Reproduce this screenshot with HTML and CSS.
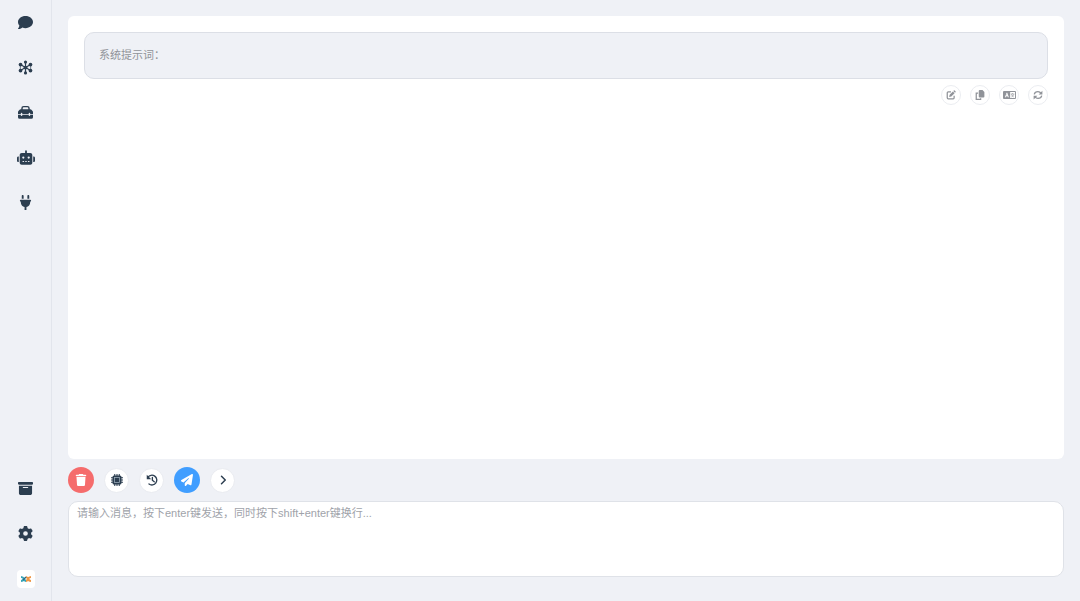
FILE: index.html
```html
<!DOCTYPE html>
<html lang="zh-CN">
<head>
    <meta charset="UTF-8">
    <meta name="viewport" content="width=device-width, initial-scale=1.0">
    <title>Chat</title>
    <link rel="stylesheet" href="styles.css">
</head>
<body>
    <!-- Sidebar -->
    <nav class="sidebar">
        <a class="nav-item" href="#chat" aria-label="聊天">
            <svg viewBox="0 0 512 512"><path d="M512 240c0 114.9-114.6 208-256 208c-37.1 0-72.3-6.4-104.1-17.9c-11.9 8.7-31.3 20.6-54.3 30.6C73.6 471.1 44.7 480 16 480c-6.5 0-12.3-3.9-14.8-9.9c-2.5-6-1.1-12.8 3.4-17.4c8-8 15-17 21.4-28.7c10-16.6 19.5-38.4 21.4-62.9C17.7 326.8 0 285.1 0 240C0 125.1 114.6 32 256 32s256 93.1 256 208z"/></svg>
        </a>
        <a class="nav-item" href="#nodes" aria-label="节点">
            <svg viewBox="0 0 16 16">
                <path d="M8 2v12M3 5l10 6M13 5L3 11" fill="none" stroke="currentColor" stroke-width="1.300"/>
                <path d="M2.500 5v6M13.500 5v6" fill="none" stroke="currentColor" stroke-width=".7"/>
                <circle cx="8" cy="8" r="2"/><circle cx="8" cy="2.200" r="1.700"/><circle cx="8" cy="13.800" r="1.700"/>
                <circle cx="2.700" cy="4.800" r="2"/><circle cx="13.300" cy="4.800" r="2"/><circle cx="2.700" cy="11.200" r="2"/><circle cx="13.300" cy="11.200" r="2"/>
            </svg>
        </a>
        <a class="nav-item" href="#tools" aria-label="工具">
            <svg viewBox="0 0 16 16"><path fill-rule="evenodd" d="M3.500 4.500V3.500Q3.500 1 6 1h4q2.500 0 2.500 2.500v1h.8q.6 0 1 .5l1.200 1.500q.5.6.5 1.300V9.500h-3V9q0-.7-.8-.7t-.8.7v.5H4.600V9q0-.7-.8-.7T3 9v.5H0V7.800q0-.7.5-1.300L1.700 5q.4-.5 1-.5zM5 4.500h6V3.500q0-1-1-1H6q-1 0-1 1zM0 10.500h3v.5q0 .7.8.7t.8-.7v-.5h6.800v.5q0 .7.8.7T13 11v-.5h3V13q0 1.700-1.700 1.700H1.700Q0 14.700 0 13z"/></svg>
        </a>
        <a class="nav-item" href="#agents" aria-label="智能体">
            <svg class="wide" viewBox="0 0 640 512"><path fill-rule="evenodd" d="M320 0c18 0 32 14 32 32v64h120c40 0 72 32 72 72v272c0 40-32 72-72 72H168c-40 0-72-32-72-72V168c0-40 32-72 72-72h120V32c0-18 14-32 32-32zM208 384a16 16 0 0 0 0 32h32a16 16 0 0 0 0-32zm96 0a16 16 0 0 0 0 32h32a16 16 0 0 0 0-32zm96 0a16 16 0 0 0 0 32h32a16 16 0 0 0 0-32zM264 256a40 40 0 1 0-80 0 40 40 0 1 0 80 0zm152 40a40 40 0 1 0 0-80 40 40 0 1 0 0 80zM48 224h16v192H48c-27 0-48-21-48-48v-96c0-27 21-48 48-48zm544 0c27 0 48 21 48 48v96c0 27-21 48-48 48h-16V224z"/></svg>
        </a>
        <a class="nav-item" href="#plugins" aria-label="插件">
            <svg viewBox="0 0 512 512"><path d="M160 0c18 0 32 14 32 32v96h-64V32c0-18 14-32 32-32zm192 0c18 0 32 14 32 32v96h-64V32c0-18 14-32 32-32zM96 160h320a32 32 0 0 1 0 64v32c0 77-55 142-128 157v99h-64v-99C151 398 96 333 96 256v-32a32 32 0 0 1 0-64z"/></svg>
        </a>
        <a class="nav-item nav-bottom" href="#archive" aria-label="归档">
            <svg viewBox="0 0 512 512"><path fill-rule="evenodd" d="M32 32h448c18 0 32 14 32 32v32c0 18-14 32-32 32H32C14 128 0 114 0 96V64c0-18 14-32 32-32zm0 128h448v256c0 35-29 64-64 64H96c-35 0-64-29-64-64zm144 48a16 16 0 0 0 0 32h160a16 16 0 0 0 0-32z"/></svg>
        </a>
        <a class="nav-item" href="#settings" aria-label="设置">
            <svg viewBox="0 0 512 512"><path d="M495.9 166.6c3.2 8.7 .5 18.4-6.4 24.6l-43.3 39.4c1.1 8.3 1.7 16.8 1.7 25.4s-.6 17.1-1.7 25.4l43.3 39.4c6.9 6.2 9.6 15.9 6.4 24.6c-4.4 11.9-9.7 23.3-15.8 34.3l-4.7 8.1c-6.6 11-14 21.4-22.1 31.2c-5.9 7.2-15.7 9.6-24.5 6.8l-55.7-17.7c-13.4 10.3-28.2 18.9-44 25.4l-12.5 57.1c-2 9.1-9 16.3-18.2 17.8c-13.8 2.3-28 3.5-42.5 3.5s-28.7-1.2-42.5-3.5c-9.2-1.5-16.2-8.7-18.2-17.8l-12.5-57.1c-15.8-6.5-30.6-15.1-44-25.4L83.1 425.9c-8.8 2.8-18.6 .3-24.5-6.8c-8.1-9.8-15.5-20.2-22.1-31.2l-4.7-8.1c-6.1-11-11.4-22.4-15.8-34.3c-3.2-8.7-.5-18.4 6.4-24.6l43.3-39.4C64.6 273.1 64 264.6 64 256s.6-17.1 1.7-25.4L22.4 191.2c-6.9-6.2-9.6-15.9-6.4-24.6c4.4-11.9 9.7-23.3 15.8-34.3l4.7-8.1c6.6-11 14-21.4 22.1-31.2c5.9-7.2 15.7-9.6 24.5-6.8l55.7 17.7c13.4-10.3 28.2-18.9 44-25.4l12.5-57.1c2-9.1 9-16.3 18.2-17.8C227.3 1.2 241.5 0 256 0s28.7 1.2 42.5 3.5c9.2 1.5 16.2 8.7 18.2 17.8l12.5 57.1c15.8 6.5 30.6 15.1 44 25.4l55.7-17.7c8.8-2.8 18.6-.3 24.5 6.8c8.1 9.8 15.5 20.2 22.1 31.2l4.7 8.1c6.1 11 11.4 22.4 15.8 34.3zM256 336a80 80 0 1 0 0-160 80 80 0 1 0 0 160z"/></svg>
        </a>
        <a class="nav-item" href="#about" aria-label="关于">
            <span class="logo">
                <svg viewBox="0 0 12 8" fill="none" stroke-width="2">
                    <path stroke="#38a5b8" d="M1 2q2 0 3 2T6 6M1 6q2 0 3-2"/>
                    <path stroke="#ef9645" d="M6 2q1 0 2 2t3 2M6 6q1 0 2-2t3-2"/>
                    <path stroke="#2d6b83" d="M3 5l3-3" stroke-width="1.500"/>
                </svg>
            </span>
        </a>
    </nav>

    <main class="main">
        <!-- Messages -->
        <section class="chat-box">
            <div class="system-prompt">系统提示词：</div>
            <div class="message-actions">
                <button class="small-button" aria-label="编辑">
                    <svg viewBox="0 0 16 16"><path d="M8 3H3.500Q2 3 2 4.500v8Q2 14 3.500 14h8q1.500 0 1.500-1.500V9" fill="none" stroke="currentColor" stroke-width="2"/><path d="M5 11l.8-3.500L11 2.300l2.700 2.700-5.200 5.200zM11.700 1.600l.8-.8q.7-.6 1.400 0l1.300 1.300q.6.7 0 1.400l-.8.8z"/></svg>
                </button>
                <button class="small-button" aria-label="复制">
                    <svg viewBox="0 0 16 16"><path d="M7.500 0H12l3 3v7.500q0 1.500-1.500 1.500h-6Q6 12 6 10.500v-9Q6 0 7.500 0z"/><path d="M5 5H2v10h7v-2" fill="none" stroke="currentColor" stroke-width="2"/></svg>
                </button>
                <button class="small-button" aria-label="翻译">
                    <svg class="wide" viewBox="0 0 20 14"><path fill-rule="evenodd" d="M1.500 1h17Q20 1 20 2.500v9q0 1.500-1.500 1.500h-17Q0 13 0 11.500v-9Q0 1 1.500 1zM11 2.500v9h7.500v-9zM5.500 3.500L3 10.500h1.500l.5-1.500h2l.5 1.500H9L6.500 3.500zM6 5.500l.6 2H5.400z"/><path d="M12 5.500h5.500M14.700 4v1.500M16.500 6q-.7 3-3.500 4M13 6q.8 3 3.500 4" fill="none" stroke="currentColor"/></svg>
                </button>
                <button class="small-button" aria-label="刷新">
                    <svg viewBox="0 0 16 16"><path d="M2 7Q3 2.500 8 2.500q3 0 5 3M14 9q-1 4.500-6 4.500-3 0-5-3" fill="none" stroke="currentColor" stroke-width="2"/><path d="M15 1v6H9zM1 15V9h6z"/></svg>
                </button>
            </div>
        </section>

        <!-- Toolbar -->
        <div class="toolbar">
            <button class="round-button danger" aria-label="清空">
                <svg viewBox="0 0 14 16"><path d="M4.500 0h5l.7 1H13q1 0 1 1t-1 1H1Q0 3 0 2t1-1h2.800zM1 4h12l-.7 10.600Q12.200 16 10.900 16H3.100Q1.800 16 1.700 14.600z"/></svg>
            </button>
            <button class="round-button" aria-label="模型">
                <svg viewBox="0 0 16 16"><path d="M5 0v16M8 0v16M11 0v16M0 5h16M0 8h16M0 11h16" stroke="currentColor" stroke-width="1.400"/><rect x="2" y="2" width="12" height="12" rx="2"/><rect x="4.700" y="4.700" width="6.600" height="6.600" fill="none" stroke="#9fb0bd"/></svg>
            </button>
            <button class="round-button" aria-label="历史">
                <svg viewBox="0 0 16 16"><path d="M2.500 4.500A6.500 6.500 0 1 1 4 13.300M8.500 4.500V8.300l2.500 2" fill="none" stroke="currentColor" stroke-width="1.800" stroke-linecap="round"/><path d="M1 1v6h6z"/></svg>
            </button>
            <button class="round-button primary" aria-label="发送">
                <svg viewBox="0 0 512 512"><path d="M498.1 5.6c10.1 7 15.4 19.1 13.5 31.2l-64 416c-1.5 9.7-7.4 18.2-16 23s-18.9 5.4-28 1.6L284 427.7l-68.5 74.1c-8.9 9.7-22.9 12.9-35.2 8.1S160 493.2 160 480V396.4c0-4 1.5-7.8 4.2-10.7L331.8 202.8c5.8-6.3 5.6-16-.4-22s-15.7-6.4-22-.7L106 360.8 17.7 316.6C7.1 311.3 .3 300.7 0 288.9s5.9-22.8 16.1-28.7l448-256c10.7-6.1 23.9-5.5 34 1.4z"/></svg>
            </button>
            <button class="round-button" aria-label="更多">
                <svg viewBox="0 0 16 16"><path d="M6 3l5 5-5 5" fill="none" stroke="currentColor" stroke-width="2" stroke-linecap="round" stroke-linejoin="round"/></svg>
            </button>
        </div>

        <textarea class="message-input" aria-label="消息" placeholder="请输入消息，按下enter键发送，同时按下shift+enter键换行..."></textarea>
    </main>
</body>
</html>
```
FILE: styles.css
```css
* {
    box-sizing: border-box;
}

body {
    margin: 0;
    min-height: 100vh;
    display: flex;
    background-color: #eff1f6;
    color: #2c3e50;
    font-family: "Liberation Sans", "Noto Sans CJK SC", sans-serif;
    font-size: 11px;
}

svg {
    display: block;
    fill: currentColor;
}

button {
    padding: 0;
    font: inherit;
    cursor: pointer;
}

/* Sidebar */
.sidebar {
    width: 52px;
    flex-shrink: 0;
    display: flex;
    flex-direction: column;
    border-right: 1px solid #e2e5ec;
}

.nav-item {
    height: 45px;
    display: flex;
    align-items: center;
    justify-content: center;
    color: #2c3e50;
}

.nav-item svg {
    width: 15px;
    height: 15px;
}

.nav-item .wide {
    width: 18px;
}

.nav-bottom {
    margin-top: auto;
}

.logo {
    width: 18px;
    height: 18px;
    display: flex;
    align-items: center;
    justify-content: center;
    background: #fff;
    border-radius: 4px;
}

.logo svg {
    width: 12px;
    height: 8px;
    fill: none;
}

/* Chat */
.main {
    flex: 1;
    min-width: 0;
    display: flex;
    flex-direction: column;
    gap: 8px;
    padding: 16px 16px 24px;
}

.chat-box {
    flex: 1;
    padding: 16px;
    background: #fff;
    border-radius: 6px;
}

.system-prompt {
    padding: 14px;
    line-height: 17px;
    color: #909399;
    background: #eff1f6;
    border: 1px solid #dcdfe6;
    border-radius: 10px;
}

.message-actions {
    display: flex;
    justify-content: flex-end;
    gap: 9px;
    margin-top: 6px;
}

.small-button {
    width: 20px;
    height: 20px;
    display: flex;
    align-items: center;
    justify-content: center;
    color: #909399;
    background: #fff;
    border: 1px solid #ebedf1;
    border-radius: 50%;
}

.small-button svg {
    width: 10px;
    height: 10px;
}

.small-button .wide {
    flex-shrink: 0;
    width: 13px;
}

/* Toolbar */
.toolbar {
    height: 26px;
    display: flex;
    align-items: center;
    gap: 10px;
}

.round-button {
    width: 25px;
    height: 25px;
    display: flex;
    align-items: center;
    justify-content: center;
    color: #2c3e50;
    background: #fff;
    border: 1px solid #e9ebf0;
    border-radius: 50%;
}

.round-button svg {
    width: 12px;
    height: 12px;
}

.round-button.danger,
.round-button.primary {
    width: 26px;
    height: 26px;
    color: #fff;
    border: none;
}

.round-button.danger {
    background: #f56c6c;
}

.round-button.primary {
    background: #409eff;
}

.message-input {
    display: block;
    width: 100%;
    height: 76px;
    padding: 2px 8px;
    font: inherit;
    line-height: 18px;
    color: #606266;
    background: #fff;
    border: 1px solid #dfe2e8;
    border-radius: 10px;
    outline: none;
    resize: none;
}

.message-input::placeholder {
    color: #a0a3aa;
}
```
